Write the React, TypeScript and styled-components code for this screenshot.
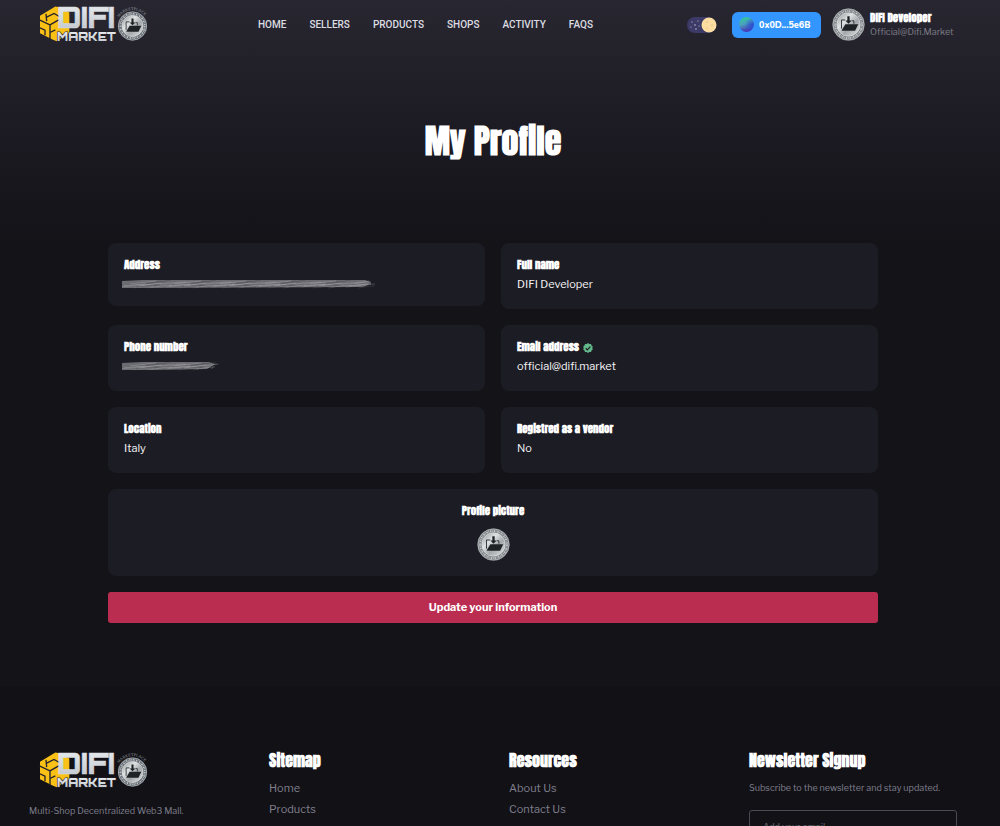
import React from 'react';
import styled, { createGlobalStyle } from 'styled-components';

const body = `'Libre Franklin', 'Liberation Sans', Arial, sans-serif`;
const display = `'Anton', 'Liberation Sans Narrow', 'Arial Narrow', sans-serif`;

const GlobalStyle = createGlobalStyle`
  *, *::before, *::after { box-sizing: border-box; }
  body { margin: 0; background: #141318; color: #fff; font-family: ${body}; }
  h1, h2, p, dl, dt, dd, ul { margin: 0; padding: 0; }
  ul { list-style: none; }
  a { color: inherit; text-decoration: none; }
  button, input { font-family: inherit; }
`;

const Page = styled.div`
  height: 100vh;
  overflow-y: auto;
  scrollbar-width: none;
  padding-right: 14px;
  background: linear-gradient(#282731 0, #1c1b23 130px, #141318 240px);
`;

const Header = styled.header`
  display: flex;
  align-items: center;
  height: 49px;
  padding: 0 29px;
`;

const HomeLink = styled.a`
  display: block;
  width: 120px;
  height: 40px;
  svg { display: block; overflow: visible; }
`;

const Nav = styled.nav`
  display: flex;
  gap: 23px;
  margin-left: 109px;
  font: 500 10px/16px Roboto, ${body};
  color: #dcdce2;
`;

const Tools = styled.div`
  display: flex;
  align-items: center;
  margin-left: auto;
`;

const ThemeSwitch = styled.label`
  position: relative;
  width: 30px;
  height: 16px;
  margin-right: 15px;
  input { position: absolute; inset: 0; margin: 0; opacity: 0; }
  svg { display: block; }
`;

const Wallet = styled.button`
  display: flex;
  align-items: center;
  gap: 5px;
  height: 26px;
  width: 89px;
  margin-right: 11px;
  padding: 0 7px;
  border: 0;
  border-radius: 6px;
  background: #3396ff;
  color: #fff;
  font: 800 9px/14px Nunito, Roboto, sans-serif;
`;

const WalletOrb = styled.span`
  flex: none;
  width: 15px;
  height: 15px;
  border-radius: 50%;
  background:
    radial-gradient(circle at 90% 55%, #2c4fd0 0, #3b50c800 50%),
    linear-gradient(165deg, #36c0a0 15%, #4aa0c0 45%, #4540b8 80%);
`;

const Account = styled.a`
  display: flex;
  align-items: center;
  gap: 5px;
  width: 125px;
  white-space: nowrap;
  svg { flex: none; }
`;

const AccountName = styled.span`
  display: block;
  font: 700 11px/14px ${display};
`;

const AccountMail = styled.span`
  display: block;
  font-size: 9px;
  line-height: 14px;
  color: #7c7c86;
`;

const Title = styled.h1`
  padding: 68px 0 78px;
  text-align: center;
  font: 700 34px/48px ${display};
`;

const Main = styled.main`
  padding: 0 108px 64px;
`;

const Fields = styled.dl`
  display: grid;
  grid-template-columns: 1fr 1fr;
  align-items: start;
  gap: 16px;
`;

const Card = styled.div<{ $wide?: boolean; $compact?: boolean }>`
  grid-column: ${p => (p.$wide ? '1 / -1' : 'auto')};
  min-height: ${p => (p.$wide ? 87 : p.$compact ? 63 : 66)}px;
  padding: 14px 16px 12px;
  border-radius: 8px;
  background: #1c1c24;
  text-align: ${p => (p.$wide ? 'center' : 'left')};
`;

const Label = styled.dt`
  font: 700 11px/16px ${display};
  svg { margin-left: 1px; vertical-align: -2px; }
`;

const Value = styled.dd`
  margin-top: 1px;
  font-size: 11px;
  line-height: 20px;
  color: #f4f4f6;
  svg { display: block; }
`;

const Picture = styled.dd`
  display: flex;
  justify-content: center;
  margin-top: 9px;
`;

const Scribble = styled.svg`
  margin-left: -2px;
  padding: 4px 0;
`;

const Update = styled.button`
  display: block;
  width: 100%;
  height: 31px;
  margin-top: 16px;
  padding: 0 0 2px;
  border: 0;
  border-radius: 3px;
  background: #bb2d50;
  color: #fff;
  font-size: 11px;
  font-weight: 700;
`;

const Footer = styled.footer`
  display: grid;
  grid-template-columns: repeat(4, minmax(0, 1fr));
  gap: 32px;
  margin-right: -14px;
  padding: 60px 43px 40px 29px;
  background: #121116;
  color: #7f7f8d;
`;

const Brand = styled.div`
  padding-top: 4px;
`;

const Tagline = styled.p`
  margin-top: 12px;
  font-size: 9px;
  line-height: 16px;
`;

const FooterTitle = styled.h2`
  font: 700 16px/26px ${display};
  color: #fff;
`;

const Links = styled.ul`
  margin-top: 5px;
  font-size: 11px;
  line-height: 21px;
`;

const Note = styled.p`
  margin-top: 7px;
  font-size: 9px;
  line-height: 16px;
`;

const Email = styled.input`
  width: 100%;
  height: 32px;
  margin-top: 14px;
  padding: 0 13px;
  border: 1px solid #4a4a52;
  border-radius: 3px;
  background: transparent;
  color: #fff;
  font-size: 9px;
  &::placeholder { color: #6c6c76; opacity: 1; }
`;

function CoinArt({ id, rim = '#767b7f' }: { id: string; rim?: string }) {
  return (
    <>
      <defs>
        <linearGradient id={id} x1="0" y1="0" x2="1" y2="1">
          <stop offset="0" stopColor="#8d9193" />
          <stop offset=".35" stopColor="#dfe2e3" />
          <stop offset=".6" stopColor="#a4a8aa" />
          <stop offset="1" stopColor="#e6e8e9" />
        </linearGradient>
      </defs>
      <circle cx="20" cy="20" r="19.5" fill={rim} />
      <circle cx="20" cy="20" r="18.8" fill="none" stroke="#c4c8ca" strokeWidth=".9" />
      <circle cx="20" cy="20" r="16.3" fill="none" stroke="#c3c7c9" strokeWidth="2.4" strokeDasharray="1.7 .9 .8 1.1" />
      <circle cx="20" cy="20" r="14.2" fill={`url(#${id})`} stroke="#e0e2e3" strokeWidth=".8" />
      <path d="M11.500 25V14.500h4.500M24 15.500h2.500v3.500" fill="none" stroke="#33363a" strokeWidth="1.200" />
      <path d="M11.500 27.500l4.700-7.700h15.600L28 27.500z" fill="#202326" />
      <path d="M18.600 10h2.800v5.200h2.500l-3.900 3.900-3.900-3.900h2.500z" fill="#202326" />
    </>
  );
}

function Coin({ id, size }: { id: string; size: number }) {
  return (
    <svg width={size} height={size} viewBox="0 0 40 40" aria-hidden="true">
      <CoinArt id={id} />
    </svg>
  );
}

function Logo({ id }: { id: string }) {
  return (
    <svg width="120" height="40" viewBox="0 0 120 40" role="img" aria-label="DIFI Market">
      <defs>
        <linearGradient id={`${id}-steel`} x1="0" y1="0" x2="0" y2="1">
          <stop offset="0" stopColor="#eef1f3" />
          <stop offset="1" stopColor="#bcc3c9" />
        </linearGradient>
        <path id={`${id}-arc`} d="M90 12.500A16 16 0 0 1 117 12.500" />
      </defs>
      <g transform="translate(7 -2.500) scale(.3333)">
        <path d="M58 12L72 14L100 30V92L62 116L48 110L12 92V40Z" fill="#f9c016" />
        <path
          d="M10 52L42 67V112M42 67L68 52M30 34L32 56M32 44L54 33L70 42M12 76L27 83V98M42 90L58 82"
          fill="none" stroke="#24222a" strokeWidth="4"
        />
      </g>
      <g fontFamily="Orbitron, Inter, sans-serif" fontWeight="900" fill={`url(#${id}-steel)`}>
        <text x="28" y="23" fontSize="29" stroke="#d5dade" strokeWidth=".500">DIFI</text>
        <text x="28" y="36" fontSize="12" stroke="#24222a" strokeWidth="1.200" paintOrder="stroke">MARKET</text>
      </g>
      <text fontSize="4" fontFamily="Liberation Serif, serif" fill="#9aa0a6">
        <textPath href={`#${id}-arc`}>MARKETPLACE</textPath>
      </text>
      <g transform="translate(88.500 6) scale(.75)">
        <CoinArt id={`${id}-coin`} rim="#565d66" />
      </g>
    </svg>
  );
}

function Redacted({ width }: { width: number }) {
  const strokes = Array.from({ length: Math.floor(width / 3) }, (_, i) => {
    const x = i * 3;
    const y = 10 - (i % 5);
    const end = Math.min(width - (i % 4) * 2, x + 14 + ((i * 3) % 5) * 4);
    return { d: `M${Math.max(0, x - 4)} ${y}Q${(x + end) / 2} ${y - 2} ${end} ${Math.max(2, y - 4 + (i % 3))}`, o: 0.2 + ((i * 7) % 5) * 0.1 };
  });
  return (
    <Scribble width={width} height="20" viewBox={`0 0 ${width} 12`} role="img" aria-label="Hidden">
      <path d={`M0 3L20 2H${width - 10}L${width - 4} 4L${width - 12} 9L30 10H0z`} fill="#808085" opacity=".8" />
      {strokes.map((s, i) => (
        <path key={i} d={s.d} fill="none" stroke={i % 3 ? '#b4b4b8' : '#3c3c42'} strokeWidth=".7" opacity={s.o} />
      ))}
    </Scribble>
  );
}

const nav = ['HOME', 'SELLERS', 'PRODUCTS', 'SHOPS', 'ACTIVITY', 'FAQS'];

export default function App() {
  return (
    <Page>
      <GlobalStyle />
      <Header>
        <HomeLink href="#home"><Logo id="top" /></HomeLink>
        <Nav>{nav.map(n => <a key={n} href={`#${n.toLowerCase()}`}>{n}</a>)}</Nav>
        <Tools>
          <ThemeSwitch>
            <input type="checkbox" role="switch" defaultChecked aria-label="Dark theme" />
            <svg width="30" height="16" viewBox="0 0 30 16" aria-hidden="true">
              <rect width="29" height="16" rx="8" fill="#3c3a66" />
              <g fill="#d6d6ea">
                <circle cx="5" cy="5" r=".6" /><circle cx="8" cy="8" r=".7" /><circle cx="11" cy="4" r=".6" />
                <circle cx="4" cy="10" r=".5" /><circle cx="9" cy="12" r=".7" /><circle cx="12" cy="9" r=".5" />
              </g>
              <circle cx="22" cy="8" r="7.500" fill="#fbdda2" />
              <g fill="#f3cf93"><circle cx="20" cy="5" r="1.300" /><circle cx="25" cy="8" r="1.500" /><circle cx="20" cy="11" r="1" /></g>
            </svg>
          </ThemeSwitch>
          <Wallet type="button"><WalletOrb />0x0D...5e6B</Wallet>
          <Account href="#profile">
            <Coin id="account" size={33} />
            <span>
              <AccountName>DIFI Developer</AccountName>
              <AccountMail>Official@Difi.Market</AccountMail>
            </span>
          </Account>
        </Tools>
      </Header>

      <Title>My Profile</Title>
      <Main>
        <Fields>
          <Card $compact><Label>Address</Label><Value><Redacted width={253} /></Value></Card>
          <Card><Label>Full name</Label><Value>DIFI Developer</Value></Card>
          <Card><Label>Phone number</Label><Value><Redacted width={97} /></Value></Card>
          <Card>
            <Label>
              Email address{' '}
              <svg width="10" height="10" viewBox="0 0 20 20" role="img" aria-label="Verified">
                <path d="M10 0l2.700 1.900 3.300.1 1 3.100 2.600 2L18.600 10l1 3-2.600 2-1 3.100-3.300.1L10 20l-2.700-1.800-3.300-.1L3 15 .4 13l1-3-1-3L3 5l1-3 3.300-.1z" fill="#62b88a" />
                <path d="M5.500 10.500l3.200 3.200 6-6.500" fill="none" stroke="#1c1c24" strokeWidth="2.400" />
              </svg>
            </Label>
            <Value>official@difi.market</Value>
          </Card>
          <Card><Label>Location</Label><Value>Italy</Value></Card>
          <Card><Label>Registred as a vendor</Label><Value>No</Value></Card>
          <Card $wide><Label>Profile picture</Label><Picture><Coin id="picture" size={33} /></Picture></Card>
        </Fields>
        <Update type="button">Update your information</Update>
      </Main>

      <Footer>
        <Brand>
          <HomeLink href="#home"><Logo id="bottom" /></HomeLink>
          <Tagline>Multi-Shop Decentralized Web3 Mall.</Tagline>
        </Brand>
        <div>
          <FooterTitle>Sitemap</FooterTitle>
          <Links><li><a href="#home">Home</a></li><li><a href="#products">Products</a></li></Links>
        </div>
        <div>
          <FooterTitle>Resources</FooterTitle>
          <Links><li><a href="#about">About Us</a></li><li><a href="#contact">Contact Us</a></li></Links>
        </div>
        <div>
          <FooterTitle>Newsletter Signup</FooterTitle>
          <Note>Subscribe to the newsletter and stay updated.</Note>
          <Email type="email" aria-label="Email" placeholder="Add your email" />
        </div>
      </Footer>
    </Page>
  );
}
